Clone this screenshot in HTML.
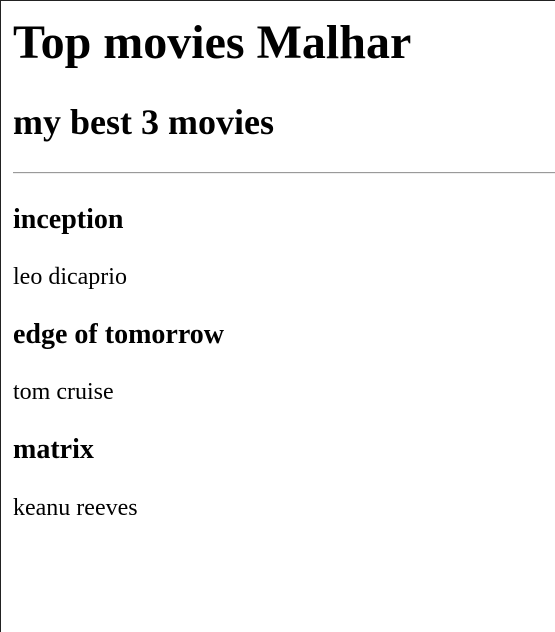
<!DOCTYPE html>
<html><head><style>
html,body{margin:0;padding:0;background:#fff;}
body{width:555px;height:632px;position:relative;overflow:hidden;font-family:"Liberation Serif",serif;color:#000;}
.b{position:absolute;left:0;top:0;width:555px;height:1px;background:#222;}
.l{position:absolute;left:0;top:0;width:1px;height:632px;background:#222;}
.t{position:absolute;left:13px;white-space:nowrap;}
.h1{font-size:48px;line-height:48px;font-weight:bold;}
.h2{font-size:36px;line-height:36px;font-weight:bold;}
.h3{font-size:28px;line-height:28px;font-weight:bold;}
.p{font-size:24px;line-height:24px;}
.hr{position:absolute;left:13px;top:172px;width:542px;height:0;border-top:1px solid #9a9a9a;border-bottom:1px solid #eee;}
</style></head><body>
<div class="b"></div><div class="l"></div>
<div class="t h1" style="top:19px">Top movies Malhar</div>
<div class="t h2" style="top:104px">my best 3 movies</div>
<div class="hr"></div>
<div class="t h3" style="top:206px">inception</div>
<div class="t p" style="top:265px">leo dicaprio</div>
<div class="t h3" style="top:321px">edge of tomorrow</div>
<div class="t p" style="top:380px">tom cruise</div>
<div class="t h3" style="top:436px">matrix</div>
<div class="t p" style="top:496px">keanu reeves</div>
</body></html>
